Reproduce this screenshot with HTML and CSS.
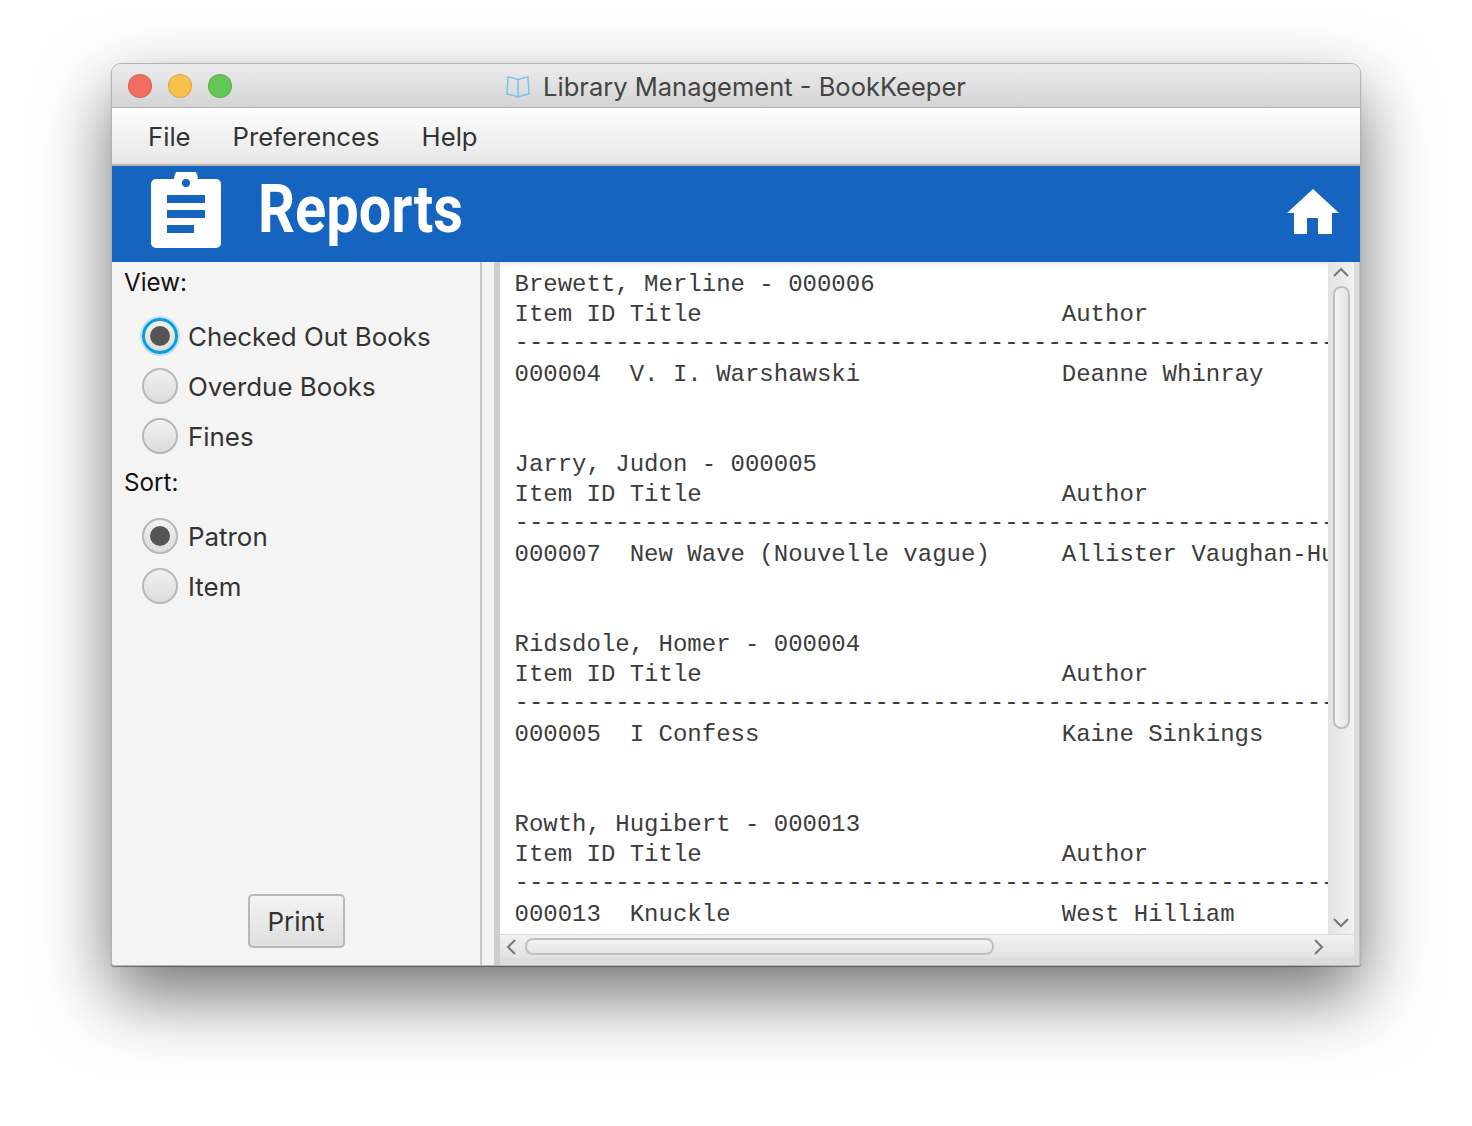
FILE: index.html
```html
<!DOCTYPE html>
<html lang="en">
<head>
    <meta charset="UTF-8">
    <meta name="viewport" content="width=device-width, initial-scale=1.0">
    <title>Library Management - BookKeeper</title>
    <link rel="stylesheet" href="styles.css">
</head>
<body>

    <div class="window">
        <div class="titlebar">
            <div class="lights">
                <span class="light red"></span>
                <span class="light yellow"></span>
                <span class="light green"></span>
            </div>
            <div class="title">
                <svg class="book-icon" width="24" height="22" viewBox="0 0 24 22" fill="none" stroke="#7cc0ee" stroke-width="1.5">
                    <path d="M12 4 C9 2 5 1.500 2 1 L1 18 C5 18.500 9 19.500 12 21 C15 19.500 19 18.500 23 18 L22 1 C19 1.500 15 2 12 4 Z"/>
                    <path d="M12 4 V21"/>
                </svg>
                <span>Library Management - BookKeeper</span>
            </div>
            <div></div>
        </div>

        <div class="menubar">
            <span>File</span>
            <span>Preferences</span>
            <span>Help</span>
        </div>

        <div class="header">
            <svg class="clip-icon" width="70" height="77" viewBox="0 0 70 77">
                <path fill="#fff" d="M5 7 H23 A12 12 0 0 1 47 7 H65 A5 5 0 0 1 70 12 V71 A5 5 0 0 1 65 76 H5 A5 5 0 0 1 0 71 V12 A5 5 0 0 1 5 7 Z"/>
                <circle cx="35" cy="11" r="4" fill="#1565c0"/>
                <rect x="16" y="23" width="38" height="8" fill="#1565c0"/>
                <rect x="16" y="38" width="38" height="8" fill="#1565c0"/>
                <rect x="16" y="53" width="27" height="8" fill="#1565c0"/>
            </svg>
            <h1>Reports</h1>
            <svg class="home-icon" width="52" height="45" viewBox="0 0 52 45">
                <path fill="#fff" d="M26 0 L52 24 H45 V45 H31 V29 H20 V45 H7 V24 H0 Z"/>
            </svg>
        </div>

        <div class="content">
            <div class="sidebar">
                <div class="group-label">View:</div>
                <div class="radio-group">
                    <div class="radio-row"><span class="radio focused checked"></span>Checked Out Books</div>
                    <div class="radio-row"><span class="radio"></span>Overdue Books</div>
                    <div class="radio-row"><span class="radio"></span>Fines</div>
                </div>
                <div class="group-label sort-label">Sort:</div>
                <div class="radio-group">
                    <div class="radio-row"><span class="radio checked"></span>Patron</div>
                    <div class="radio-row"><span class="radio"></span>Item</div>
                </div>
                <button class="print-btn">Print</button>
            </div>

            <div class="splitter"></div>

            <div class="report-pane">
                <div class="report-top">
                    <pre class="report">Brewett, Merline - 000006
Item ID Title                         Author
<span class="rule">-----------------------------------------------------------------------------</span>
000004  V. I. Warshawski              Deanne Whinray


Jarry, Judon - 000005
Item ID Title                         Author
<span class="rule">-----------------------------------------------------------------------------</span>
000007  New Wave (Nouvelle vague)     Allister Vaughan-Hubert


Ridsdole, Homer - 000004
Item ID Title                         Author
<span class="rule">-----------------------------------------------------------------------------</span>
000005  I Confess                     Kaine Sinkings


Rowth, Hugibert - 000013
Item ID Title                         Author
<span class="rule">-----------------------------------------------------------------------------</span>
000013  Knuckle                       West Hilliam</pre>
                    <div class="vscroll">
                        <svg width="16" height="10" viewBox="0 0 16 10" fill="none" stroke="#777" stroke-width="2"><path d="M1 9 L8 2 L15 9"/></svg>
                        <div class="vthumb-track"><div class="vthumb"></div></div>
                        <svg width="16" height="10" viewBox="0 0 16 10" fill="none" stroke="#777" stroke-width="2"><path d="M1 1 L8 8 L15 1"/></svg>
                    </div>
                </div>
                <div class="hscroll">
                    <svg width="10" height="16" viewBox="0 0 10 16" fill="none" stroke="#777" stroke-width="2"><path d="M9 1 L2 8 L9 15"/></svg>
                    <div class="hthumb-track"><div class="hthumb"></div></div>
                    <svg width="10" height="16" viewBox="0 0 10 16" fill="none" stroke="#777" stroke-width="2"><path d="M1 1 L8 8 L1 15"/></svg>
                </div>
            </div>
        </div>
    </div>

</body>
</html>
```

FILE: styles.css
```css
body {
    margin: 0;
    background-color: #fff;
    font-family: Inter, 'Noto Sans', sans-serif;
    color: #333;
    padding: 63px 111px;
    height: 1126px;
    box-sizing: border-box;
    overflow: hidden;
}

.window {
    width: 1250px;
    height: 903px;
    box-sizing: border-box;
    border: 1px solid #b4b4b4;
    border-radius: 10px 10px 3px 3px;
    background-color: #f4f4f4;
    box-shadow: 0 1px 1px rgba(0, 0, 0, 0.35), 0 30px 70px rgba(0, 0, 0, 0.55);
    overflow: hidden;
    display: flex;
    flex-direction: column;
}

.titlebar {
    height: 44px;
    flex: none;
    box-sizing: border-box;
    display: grid;
    grid-template-columns: 1fr auto 1fr;
    align-items: center;
    padding: 0 16px;
    background: linear-gradient(#ececec, #d4d4d4);
    border-bottom: 1px solid #b1b1b1;
}

.lights {
    display: flex;
    gap: 16px;
}

.light {
    width: 24px;
    height: 24px;
    box-sizing: border-box;
    border-radius: 50%;
    border: 1px solid rgba(0, 0, 0, 0.12);
}

.red { background-color: #f26d61; }
.yellow { background-color: #f8c14e; }
.green { background-color: #62c755; }

.title {
    display: flex;
    align-items: center;
    gap: 13px;
    font-size: 25.5px;
    color: #444;
    padding-top: 2px;
}

.menubar {
    height: 58px;
    flex: none;
    box-sizing: border-box;
    display: flex;
    align-items: center;
    gap: 42px;
    padding-left: 36px;
    font-size: 25.7px;
    background: linear-gradient(#fdfdfd, #e7e7e7);
    border-bottom: 2px solid #b4b4b4;
}

.header {
    height: 96px;
    flex: none;
    display: flex;
    align-items: center;
    background-color: #1565c0;
    padding: 0 21px 0 39px;
}

.clip-icon {
    margin-bottom: 7px;
}

.header h1 {
    margin: 0 0 10px 37px;
    font-family: Roboto, sans-serif;
    font-size: 66px;
    font-weight: 700;
    color: #fff;
    transform: scaleX(0.875);
    transform-origin: left center;
}

.home-icon {
    margin-left: auto;
    margin-bottom: 6px;
}

.content {
    flex: 1;
    min-height: 0;
    display: flex;
}

.sidebar {
    width: 370px;
    flex: none;
    box-sizing: border-box;
    display: flex;
    flex-direction: column;
    padding: 0 0 17px 12px;
    border-right: 2px solid #c6c6c6;
}

.group-label {
    height: 42px;
    line-height: 42px;
    font-size: 24.2px;
    color: #111;
}

.sort-label {
    margin-top: 1px;
}

.radio-group {
    display: flex;
    flex-direction: column;
    padding: 7px 0 0 18px;
}

.radio-row {
    height: 50px;
    display: flex;
    align-items: center;
    gap: 10px;
    font-size: 25.9px;
}

.radio {
    width: 36px;
    height: 36px;
    box-sizing: border-box;
    border-radius: 50%;
    border: 2px solid #b8b8b8;
    background: linear-gradient(#f2f2f2, #dcdcdc);
    display: flex;
    align-items: center;
    justify-content: center;
}

.radio.checked::after {
    content: "";
    width: 20px;
    height: 20px;
    border-radius: 50%;
    background-color: #555;
}

.radio.focused {
    border: 3px solid #0a9fd8;
    box-shadow: 0 0 0 2px rgba(3, 158, 211, 0.22);
}

.print-btn {
    margin: auto auto 0;
    position: relative;
    left: -6px;
    width: 97px;
    height: 54px;
    box-sizing: border-box;
    border: 2px solid #b8b8b8;
    border-radius: 5px;
    background: linear-gradient(#f3f3f3, #dfdfdf);
    font-family: inherit;
    font-size: 26px;
    color: #333;
    padding: 0;
}

.splitter {
    width: 12px;
    flex: none;
    background-color: #f2f2f2;
    border-right: 6px solid #cdcdcd;
}

.report-pane {
    flex: 1;
    min-width: 0;
    display: flex;
    flex-direction: column;
    background-color: #dcdcdc;
    padding-right: 5px;
    padding-bottom: 7px;
    box-sizing: border-box;
    border-right: 1px solid #c4c4c4;
}

.report-top {
    flex: 1;
    min-height: 0;
    display: flex;
}

.report {
    flex: 1;
    min-width: 0;
    margin: 0;
    padding: 8px 0 0 14.500px;
    overflow: hidden;
    background-color: #fff;
    font-family: 'Liberation Mono', monospace;
    font-size: 24px;
    line-height: 30px;
    color: #3c3c3c;
    box-shadow: inset 0 6px 6px -6px rgba(0, 0, 0, 0.2);
}

.rule {
    vertical-align: 2px;
    line-height: 0;
}

.vscroll {
    width: 26px;
    flex: none;
    box-sizing: border-box;
    display: flex;
    flex-direction: column;
    align-items: center;
    padding: 5px 0 6px;
    background: linear-gradient(90deg, #e4e4e4, #f1f1f1);
}

.vthumb-track {
    flex: 1;
    width: 100%;
    padding: 9px 4px 0 5px;
    box-sizing: border-box;
}

.vthumb {
    height: 443px;
    box-sizing: border-box;
    border: 2px solid #c0c0c0;
    border-radius: 8px;
    background: linear-gradient(90deg, #f4f4f4, #e4e4e4);
}

.hscroll {
    height: 24px;
    flex: none;
    box-sizing: border-box;
    display: flex;
    align-items: center;
    padding: 0 30px 0 6px;
    background: linear-gradient(#f1f1f1, #e2e2e2);
    border-top: 1px solid #d8d8d8;
}

.hthumb-track {
    flex: 1;
    padding: 0 9px;
}

.hthumb {
    width: 469px;
    height: 17px;
    box-sizing: border-box;
    border: 2px solid #c0c0c0;
    border-radius: 8px;
    background: linear-gradient(#f4f4f4, #e4e4e4);
}
```
